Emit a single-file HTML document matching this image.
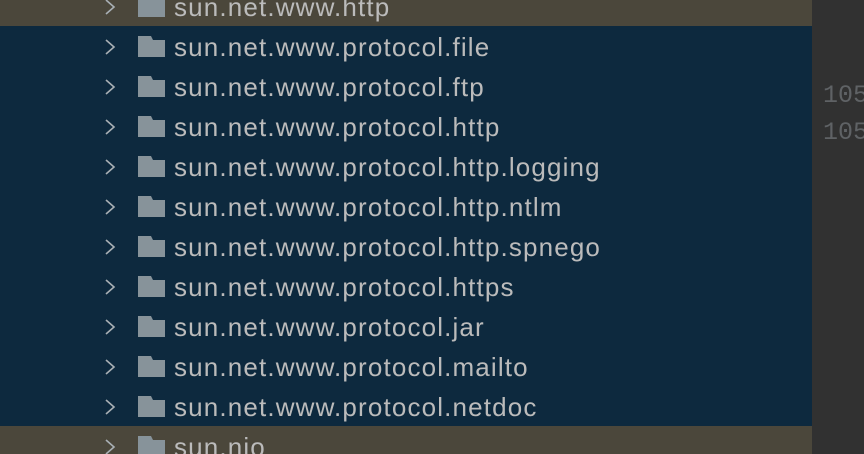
<!DOCTYPE html>
<html><head><style>
html,body{margin:0;width:864px;height:454px;overflow:hidden}
body{background:#2b2b2b;font-family:"Liberation Sans",sans-serif;position:relative}
.left{position:absolute;left:0;top:0;width:812px;height:454px;background:#2b2b2b}
.row{position:absolute;left:0;width:812px;height:40px;overflow:hidden}
.sel{background:#0d293e}
.hl{background:#4b473b}
.chev{position:absolute;left:102px;top:12px}
.fold{position:absolute;left:138px;top:10px}
.t{position:absolute;left:174px;top:6px;font-size:26px;color:#bbbbbb;white-space:nowrap;letter-spacing:1.15px}
.right{position:absolute;left:812px;top:0;width:52px;height:454px;background:#313131}
.n{position:absolute;left:823px;font-family:"Liberation Mono",monospace;font-size:25px;color:#5f6265}
</style></head><body>
<div class="left"></div>
<div class="right"></div>
<div class="n" style="top:81px">105</div>
<div class="n" style="top:118px">105</div>
<div class="row hl" style="top:-14px"><svg class="chev" width="16" height="18"><path d="M4 2 L12 9 L4 16" fill="none" stroke="#a9b0b5" stroke-width="1.6"/></svg><svg class="fold" width="28" height="22"><path d="M0 0H13L15 4H27V21H0Z" fill="#87939a"/></svg><div class="t">sun.net.www.http</div></div>
<div class="row sel" style="top:26px"><svg class="chev" width="16" height="18"><path d="M4 2 L12 9 L4 16" fill="none" stroke="#a9b0b5" stroke-width="1.6"/></svg><svg class="fold" width="28" height="22"><path d="M0 0H13L15 4H27V21H0Z" fill="#87939a"/></svg><div class="t">sun.net.www.protocol.file</div></div>
<div class="row sel" style="top:66px"><svg class="chev" width="16" height="18"><path d="M4 2 L12 9 L4 16" fill="none" stroke="#a9b0b5" stroke-width="1.6"/></svg><svg class="fold" width="28" height="22"><path d="M0 0H13L15 4H27V21H0Z" fill="#87939a"/></svg><div class="t">sun.net.www.protocol.ftp</div></div>
<div class="row sel" style="top:106px"><svg class="chev" width="16" height="18"><path d="M4 2 L12 9 L4 16" fill="none" stroke="#a9b0b5" stroke-width="1.6"/></svg><svg class="fold" width="28" height="22"><path d="M0 0H13L15 4H27V21H0Z" fill="#87939a"/></svg><div class="t">sun.net.www.protocol.http</div></div>
<div class="row sel" style="top:146px"><svg class="chev" width="16" height="18"><path d="M4 2 L12 9 L4 16" fill="none" stroke="#a9b0b5" stroke-width="1.6"/></svg><svg class="fold" width="28" height="22"><path d="M0 0H13L15 4H27V21H0Z" fill="#87939a"/></svg><div class="t">sun.net.www.protocol.http.logging</div></div>
<div class="row sel" style="top:186px"><svg class="chev" width="16" height="18"><path d="M4 2 L12 9 L4 16" fill="none" stroke="#a9b0b5" stroke-width="1.6"/></svg><svg class="fold" width="28" height="22"><path d="M0 0H13L15 4H27V21H0Z" fill="#87939a"/></svg><div class="t">sun.net.www.protocol.http.ntlm</div></div>
<div class="row sel" style="top:226px"><svg class="chev" width="16" height="18"><path d="M4 2 L12 9 L4 16" fill="none" stroke="#a9b0b5" stroke-width="1.6"/></svg><svg class="fold" width="28" height="22"><path d="M0 0H13L15 4H27V21H0Z" fill="#87939a"/></svg><div class="t">sun.net.www.protocol.http.spnego</div></div>
<div class="row sel" style="top:266px"><svg class="chev" width="16" height="18"><path d="M4 2 L12 9 L4 16" fill="none" stroke="#a9b0b5" stroke-width="1.6"/></svg><svg class="fold" width="28" height="22"><path d="M0 0H13L15 4H27V21H0Z" fill="#87939a"/></svg><div class="t">sun.net.www.protocol.https</div></div>
<div class="row sel" style="top:306px"><svg class="chev" width="16" height="18"><path d="M4 2 L12 9 L4 16" fill="none" stroke="#a9b0b5" stroke-width="1.6"/></svg><svg class="fold" width="28" height="22"><path d="M0 0H13L15 4H27V21H0Z" fill="#87939a"/></svg><div class="t">sun.net.www.protocol.jar</div></div>
<div class="row sel" style="top:346px"><svg class="chev" width="16" height="18"><path d="M4 2 L12 9 L4 16" fill="none" stroke="#a9b0b5" stroke-width="1.6"/></svg><svg class="fold" width="28" height="22"><path d="M0 0H13L15 4H27V21H0Z" fill="#87939a"/></svg><div class="t">sun.net.www.protocol.mailto</div></div>
<div class="row sel" style="top:386px"><svg class="chev" width="16" height="18"><path d="M4 2 L12 9 L4 16" fill="none" stroke="#a9b0b5" stroke-width="1.6"/></svg><svg class="fold" width="28" height="22"><path d="M0 0H13L15 4H27V21H0Z" fill="#87939a"/></svg><div class="t">sun.net.www.protocol.netdoc</div></div>
<div class="row hl" style="top:426px"><svg class="chev" width="16" height="18"><path d="M4 2 L12 9 L4 16" fill="none" stroke="#a9b0b5" stroke-width="1.6"/></svg><svg class="fold" width="28" height="22"><path d="M0 0H13L15 4H27V21H0Z" fill="#87939a"/></svg><div class="t">sun.nio</div></div>
</body></html>
